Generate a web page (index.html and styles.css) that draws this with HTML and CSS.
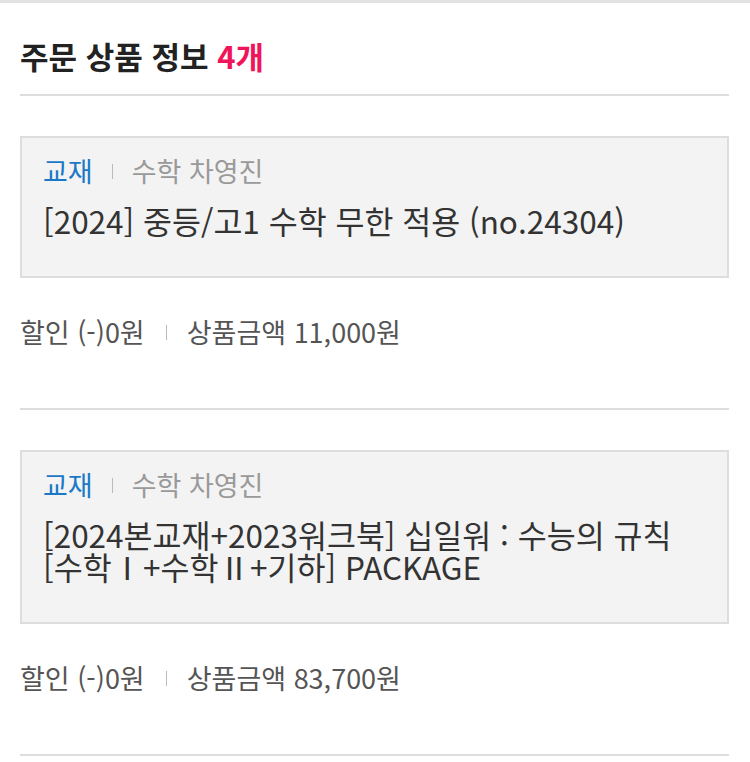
FILE: index.html
```html
<!DOCTYPE html>
<html lang="ko">
<head>
  <meta charset="UTF-8" />
  <meta name="viewport" content="width=device-width, initial-scale=1.0" />
  <title>주문 상품 정보</title>
  <link rel="stylesheet" href="styles.css">
</head>
<body>

<div class="order">
  <h2 class="order-title">주문 상품 정보 <span class="count">4개</span></h2>

  <div class="item">
    <div class="item-box">
      <div class="meta">
        <span class="type">교재</span>
        <span class="bar"></span>
        <span class="author">수학 차영진</span>
      </div>
      <div class="name">[2024] 중등/고1 수학 무한 적용 (no.24304)</div>
    </div>
    <div class="price">
      <span>할인 (-)0원</span>
      <span class="bar"></span>
      <span>상품금액 11,000원</span>
    </div>
  </div>

  <div class="item">
    <div class="item-box">
      <div class="meta">
        <span class="type">교재</span>
        <span class="bar"></span>
        <span class="author">수학 차영진</span>
      </div>
      <div class="name">
        <div>[2024본교재+2023워크북] 십일워 : 수능의 규칙</div>
        <div>[수학Ⅰ+수학Ⅱ+기하] PACKAGE</div>
      </div>
    </div>
    <div class="price">
      <span>할인 (-)0원</span>
      <span class="bar"></span>
      <span>상품금액 83,700원</span>
    </div>
  </div>
</div>

</body>
</html>
```

FILE: styles.css
```css
* {
  box-sizing: border-box;
}
html, body {
  margin: 0;
  padding: 0;
  background: #fff;
  font-family: "Noto Sans CJK KR", "Noto Sans", sans-serif;
  color: #333;
}
body {
  border-top: 3px solid #e2e2e2;
}
.order {
  padding: 0 21px 0 20px;
}
.order-title {
  margin: 0;
  padding: 32px 0 18px;
  font-size: 31px;
  font-weight: 700;
  line-height: 41px;
  color: #222;
  border-bottom: 2px solid #ddd;
}
.count {
  color: #f0145a;
}
.item {
  padding-top: 40px;
  border-bottom: 2px solid #ddd;
}
.item-box {
  background: #f3f3f3;
  border: 2px solid #ddd;
  padding: 13px 21px 40px;
}
.meta {
  display: flex;
  align-items: center;
  font-size: 27px;
  line-height: 40px;
}
.type {
  color: #1a78c8;
}
.author {
  color: #999;
}
.bar {
  display: inline-block;
  width: 1px;
  height: 15px;
  background: #bbb;
  margin: 0 19px 0 19px;
}
.name {
  margin-top: 13px;
  font-size: 31.5px;
  line-height: 32px;
  color: #333;
}
.price {
  display: flex;
  align-items: center;
  padding: 34px 0 56px;
  font-size: 27px;
  line-height: 40px;
  color: #555;
}
.price .bar {
  margin: 0 20px 0 21px;
}
```
